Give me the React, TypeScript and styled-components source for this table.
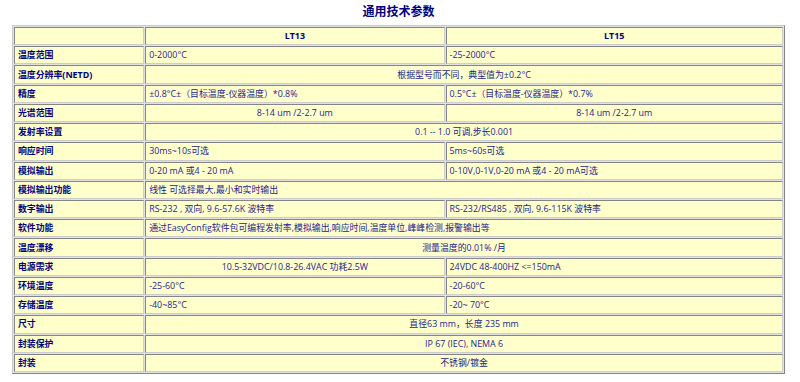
import React from "react";
import styled, { createGlobalStyle } from "styled-components";

const GlobalStyle = createGlobalStyle`
  html, body {
    margin: 0;
    padding: 0;
    background: #ffffff;
  }
  body {
    font-family: "Open Sans", "Noto Sans CJK SC", sans-serif;
  }
`;

const Page = styled.div`
  width: 773px;
  padding: 2px 0 0 12px;
`;

const Title = styled.h1`
  margin: 0 0 6px;
  font-family: "Noto Sans CJK SC", sans-serif;
  font-size: 12px;
  line-height: 17px;
  font-weight: 700;
  color: #000080;
  text-align: center;
`;

const SpecTable = styled.table`
  width: 773px;
  height: 349px;
  table-layout: fixed;
  border-collapse: separate;
  border-spacing: 1px;
  border: 1px solid;
  border-color: #c9c9c9 #858585 #858585 #c9c9c9;
  background: #e2e2e2;
  font-family: "Open Sans", "Noto Sans CJK SC", sans-serif;
  font-size: 8.9px;
`;

const Row = styled.tr``;

const Cell = styled.td<{ $align?: "left" | "center"; $head?: boolean }>`
  padding: 0 3px;
  border: 1px solid;
  border-color: #858585 #cdcdcd #cdcdcd #858585;
  background: #ffffcc;
  color: ${(p) => (p.$head ? "#000080" : "#232391")};
  font-weight: ${(p) => (p.$head ? 700 : 400)};
  text-align: ${(p) => p.$align ?? "left"};
  white-space: nowrap;
  vertical-align: middle;
  line-height: 12px;
`;

const LabelCell = styled(Cell).attrs({ $head: true })``;

type V = { text: string; align?: "left" | "center" };
type RowData = { label: string; span?: V; a?: V; b?: V };

const rows: RowData[] = [
  { label: "温度范围", a: { text: "0-2000°C" }, b: { text: "-25-2000°C" } },
  { label: "温度分辨率(NETD)", span: { text: "根据型号而不同，典型值为±0.2°C", align: "center" } },
  {
    label: "精度",
    a: { text: "±0.8°C±（目标温度-仪器温度）*0.8%" },
    b: { text: "0.5°C±（目标温度-仪器温度）*0.7%" },
  },
  {
    label: "光谱范围",
    a: { text: "8-14 um /2-2.7 um", align: "center" },
    b: { text: "8-14 um /2-2.7 um", align: "center" },
  },
  { label: "发射率设置", span: { text: "0.1 -- 1.0 可调,步长0.001", align: "center" } },
  { label: "响应时间", a: { text: "30ms~10s可选" }, b: { text: "5ms~60s可选" } },
  {
    label: "模拟输出",
    a: { text: "0-20 mA 或4 - 20 mA" },
    b: { text: "0-10V,0-1V,0-20 mA 或4 - 20 mA可选" },
  },
  { label: "模拟输出功能", span: { text: "线性 可选择最大,最小和实时输出" } },
  {
    label: "数字输出",
    a: { text: "RS-232 , 双向, 9.6-57.6K 波特率" },
    b: { text: "RS-232/RS485 , 双向, 9.6-115K 波特率" },
  },
  {
    label: "软件功能",
    span: { text: "通过EasyConfig软件包可编程发射率,模拟输出,响应时间,温度单位,峰峰检测,报警输出等" },
  },
  { label: "温度漂移", span: { text: "测量温度的0.01% /月", align: "center" } },
  {
    label: "电源需求",
    a: { text: "10.5-32VDC/10.8-26.4VAC 功耗2.5W", align: "center" },
    b: { text: "24VDC 48-400HZ <=150mA" },
  },
  { label: "环境温度", a: { text: "-25-60°C" }, b: { text: "-20-60°C" } },
  { label: "存储温度", a: { text: "-40~85°C" }, b: { text: "-20~ 70°C" } },
  { label: "尺寸", span: { text: "直径63 mm，长度 235 mm", align: "center" } },
  { label: "封装保护", span: { text: "IP 67 (IEC), NEMA 6", align: "center" } },
  { label: "封装", span: { text: "不锈钢/镀金", align: "center" } },
];

export default function App() {
  return (
    <>
      <GlobalStyle />
      <Page>
        <Title>通用技术参数</Title>
        <SpecTable>
          <colgroup>
            <col style={{ width: 130 }} />
            <col style={{ width: 299 }} />
            <col style={{ width: 337 }} />
          </colgroup>
          <tbody>
            <Row>
              <LabelCell />
              <LabelCell $align="center">LT13</LabelCell>
              <LabelCell $align="center">LT15</LabelCell>
            </Row>
            {rows.map((r) => (
              <Row key={r.label}>
                <LabelCell>{r.label}</LabelCell>
                {r.span ? (
                  <Cell colSpan={2} $align={r.span.align}>
                    {r.span.text}
                  </Cell>
                ) : (
                  <>
                    <Cell $align={r.a?.align}>{r.a?.text}</Cell>
                    <Cell $align={r.b?.align}>{r.b?.text}</Cell>
                  </>
                )}
              </Row>
            ))}
          </tbody>
        </SpecTable>
      </Page>
    </>
  );
}
